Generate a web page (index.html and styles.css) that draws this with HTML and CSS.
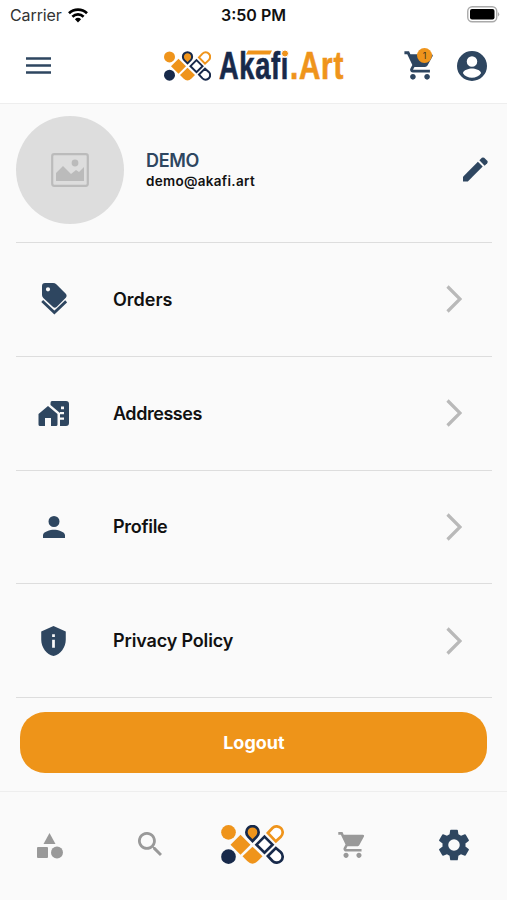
FILE: index.html
```html
<!DOCTYPE html>
<html lang="en">
<head>
<meta charset="utf-8">
<title>Akafi.Art</title>
<link rel="stylesheet" href="styles.css">
</head>
<body>
<svg class="defs" width="0" height="0">
  <symbol id="mark" viewBox="33 29 188 117">
    <circle cx="55" cy="51" r="22" fill="#ef941b"/>
    <circle cx="55" cy="124" r="22" fill="#17294a"/>
    <path d="M91 58l30 30-30 30-30-30z" fill="#ef941b"/>
    <path d="M127 94l30 29-14 14q-16 16-32 0l-14-14z" fill="#ef941b"/>
    <path d="M127 77l-13-13a18.500 18.500 0 1 1 26 0z" fill="#ef941b" stroke="#17294a" stroke-width="8"/>
    <path d="M163 64l24 24-24 24-24-24z" fill="#fff" stroke="#17294a" stroke-width="8"/>
    <path d="M173 53l14-15a18 18 0 1 1 25 26l-15 14z" fill="#fff" stroke="#ef941b" stroke-width="8"/>
    <path d="M173 122l14 15a18 18 0 1 0 25-26l-15-13z" fill="#fff" stroke="#17294a" stroke-width="8"/>
  </symbol>
  <symbol id="cart" viewBox="0 0 24 24"><path d="M7 18c-1.100 0-1.990.9-1.990 2S5.900 22 7 22s2-.9 2-2-.9-2-2-2zM1 2v2h2l3.600 7.590-1.350 2.450c-.16.280-.25.610-.25.960 0 1.100.9 2 2 2h12v-2H7.420c-.14 0-.25-.11-.25-.25l.03-.12.900-1.630h7.450c.75 0 1.410-.41 1.750-1.030l3.580-6.490A1 1 0 0 0 20 4H5.210l-.94-2H1zm16 16c-1.100 0-1.990.9-1.990 2s.89 2 1.990 2 2-.9 2-2-.9-2-2-2z"/></symbol>
</svg>
<div class="status">
  <span class="carrier">Carrier</span>
  <svg class="wifi" viewBox="0 0 20 15" fill="none" stroke="#000"><path class="arc" d="M1 5.200a13 13 0 0 1 18 0" stroke-width="2.700"/><path class="arc" d="M4.400 8.700a8 8 0 0 1 11.200 0" stroke-width="2.600"/><path d="M10 14.500L6.900 11.300a4.500 4.500 0 0 1 6.200 0z" fill="#000" stroke="none"/></svg>
  <span class="time">3:50 PM</span>
  <svg class="battery" viewBox="0 0 33 17"><rect x=".75" y=".75" width="29" height="15" rx="4.500" fill="#fff" stroke="#aaa" stroke-width="1.400"/><rect x="3" y="3" width="24.500" height="10.500" rx="2"/><path d="M31.200 6q2 2.300 0 4.600z" fill="#999"/></svg>
</div>
<header class="header">
  <svg class="menu" viewBox="0 0 25 17"><path d="M0 1.500h25M0 8.500h25M0 15.500h25" stroke="#2e4660" stroke-width="2.600"/></svg>
  <div class="brand">
    <svg class="brand-mark"><use href="#mark"/></svg>
    <svg class="wordmark" viewBox="0 0 126 36"><text class="word navy" x="0" y="31" textLength="70" lengthAdjust="spacingAndGlyphs">Akafi</text><text class="word orange" x="71" y="31" textLength="54" lengthAdjust="spacingAndGlyphs">.Art</text><path d="M29 2.500h24l-2 4H27z" fill="#ef941b"/><circle cx="66" cy="5.500" r="3.500" fill="#ef941b" stroke="#fff"/></svg>
  </div>
  <div class="header-cart"><svg viewBox="0 0 24 24"><use href="#cart"/></svg><span class="badge">1</span></div>
  <svg class="account" viewBox="2 2 20 20"><path d="M12 2a10 10 0 1 0 0 20 10 10 0 0 0 0-20zm0 3.500a3.500 3.500 0 1 1 0 7 3.500 3.500 0 0 1 0-7zm0 14.300c-2.500 0-4.900-1.100-6-3 .03-2 4-3.100 6-3.100s5.970 1.100 6 3.100c-1.300 1.900-3.500 3-6 3z"/></svg>
</header>
<main class="main">
  <section class="user">
    <div class="avatar"><svg viewBox="0 0 38 34"><rect x="1.200" y="1.200" width="35.600" height="31.600" rx="2" fill="none" stroke="#bbb" stroke-width="2.200"/><path d="M5 28V20l7-7 8 8 5-4 3 2 5-5v14z" fill="#bbb"/><circle cx="24" cy="10" r="3.400" fill="#bbb"/></svg></div>
    <div class="identity"><div class="name">DEMO</div><div class="email">demo@akafi.art</div></div>
    <svg class="edit" viewBox="0 0 26 26"><path d="M0 20.500L15.500 5l5 5L5 25.500H0z"/><path d="M17 3.500l2.600-2.600q1.200-1 2.400 0L25.200 4q1 1.200 0 2.400L22.500 9z"/></svg>
  </section>
  <nav class="list">
    <a class="row"><span class="icon"><svg class="tags" viewBox="0 0 26 32"><path fill-rule="evenodd" d="M1 3Q1 0 4 0h8q2 0 3.300 1.300l9.500 9.500q1.600 2 0 4l-9 9q-2 2-4 0L2.300 15Q1 13.700 1 12zm6 1.200a2.100 2.100 0 1 0 0 4.200 2.100 2.100 0 0 0 0-4.200z"/><path d="M1.200 18L13.400 29.600 25.200 18.300" fill="none" stroke="#2e4660" stroke-width="2.800"/></svg></span><span class="label">Orders</span><svg class="chevron" viewBox="0 0 16 28"><path d="M1.500 1.500L14 14 1.500 26.500"/></svg></a>
    <a class="row"><span class="icon"><svg class="home" viewBox="0 0 31 25"><path d="M.5 13L10 5l9.500 8v10.500q0 1.500-1.500 1.500h-5v-8H7v8H2Q.5 25 .5 23.500z"/><path fill-rule="evenodd" d="M14 0h14q3 0 3 3v19q0 3-3 3h-6V12L12.500 4V2q0-2 1.500-2zm9 5.500v2.700h3V5.500zm-1 5.500v2.200h4V11zm0 5.500v2.200h4v-2.200z"/></svg></span><span class="label addresses">Addresses</span><svg class="chevron" viewBox="0 0 16 28"><path d="M1.500 1.500L14 14 1.500 26.500"/></svg></a>
    <a class="row"><span class="icon"><svg class="person" viewBox="4 4 16 16"><path d="M12 12a4 4 0 1 0 0-8 4 4 0 0 0 0 8zm0 2c-2.670 0-8 1.340-8 4v2h16v-2c0-2.660-5.330-4-8-4z"/></svg></span><span class="label profile">Profile</span><svg class="chevron" viewBox="0 0 16 28"><path d="M1.500 1.500L14 14 1.500 26.500"/></svg></a>
    <a class="row"><span class="icon"><svg class="shield" viewBox="3 1 18 22"><path fill-rule="evenodd" d="M12 1L3 5v6c0 5.550 3.840 10.740 9 12 5.160-1.260 9-6.450 9-12V5zm-1 6h2v2h-2zm0 4h2v6h-2z"/></svg></span><span class="label privacy">Privacy Policy</span><svg class="chevron" viewBox="0 0 16 28"><path d="M1.500 1.500L14 14 1.500 26.500"/></svg></a>
  </nav>
  <button class="logout">Logout</button>
</main>
<footer class="tabs">
  <svg class="shapes" viewBox="0 0 26 26"><path d="M12.500 0l6 11h-12z"/><rect y="14" width="11" height="11" rx="1"/><circle cx="20" cy="19.500" r="6"/></svg>
  <svg class="search" viewBox="3 3 17.500 17.500"><path d="M15.500 14h-.79l-.28-.27A6.500 6.500 0 1 0 13.730 14.430l.27.280v.79l5 4.990L20.490 19zm-6 0a4.500 4.500 0 1 1 0-9 4.500 4.500 0 0 1 0 9z"/></svg>
  <svg class="tab-mark"><use href="#mark"/></svg>
  <svg class="tab-cart" viewBox="0 0 24 24"><use href="#cart"/></svg>
  <svg class="gear" viewBox="2 2 20 20"><path d="M19.140 12.940c.04-.3.060-.61.060-.94 0-.32-.02-.64-.07-.94l2.030-1.580a.49.490 0 0 0 .12-.61l-1.920-3.320a.49.490 0 0 0-.59-.22l-2.390.96a7 7 0 0 0-1.620-.94l-.36-2.540A.48.480 0 0 0 13.920 2.400h-3.840a.48.480 0 0 0-.48.410l-.36 2.540a7.300 7.300 0 0 0-1.620.94l-2.390-.96a.48.480 0 0 0-.59.220L2.720 8.870a.48.480 0 0 0 .12.610l2.030 1.580a6 6 0 0 0 0 1.880l-2.030 1.580a.49.490 0 0 0-.12.610l1.920 3.320c.12.220.37.290.59.220l2.390-.96c.5.380 1.030.7 1.620.94l.36 2.540c.05.240.24.410.48.410h3.840c.24 0 .44-.17.470-.41l.36-2.540a7 7 0 0 0 1.620-.94l2.390.96c.22.080.47 0 .59-.22l1.920-3.320a.48.480 0 0 0-.12-.61zM12 15.600a3.600 3.600 0 1 1 0-7.200 3.600 3.600 0 0 1 0 7.200z"/></svg>
</footer>
</body>
</html>
```
FILE: styles.css
```css
* { box-sizing: border-box; }
body { margin: 0; width: 507px; height: 900px; display: flex; flex-direction: column; background: #fafafa; font-family: Inter, "Liberation Sans", sans-serif; color: #111; overflow: hidden; }
svg { display: block; flex: none; fill: #2e4660; }
.defs { position: absolute; }
.status { height: 30px; flex: none; display: flex; padding: 0 7px 0 10px; align-items: center; background: #fff; font-size: 16px; line-height: 30px; }
.carrier { width: 58px; color: #333; letter-spacing: -.1px; white-space: nowrap; }
.wifi { width: 20px; height: 15px; }
.arc { fill: none; }
.time { width: 70px; margin-left: 133px; font-weight: 600; white-space: nowrap; }
.battery { width: 33px; height: 17px; margin-left: auto; margin-top: -2px; fill: #000; }
.header { height: 74px; flex: none; background: #fff; border-bottom: 1px solid #eee; display: flex; align-items: center; padding: 0 19px 2px 26px; }
.menu { width: 25px; height: 17px; }
.brand { display: flex; align-items: center; margin-left: 113px; gap: 8px; }
.brand-mark { width: 47px; height: 30px; }
.wordmark { width: 126px; height: 36px; overflow: visible; }
.word { font: 700 39px "Liberation Sans", sans-serif; letter-spacing: 1px; stroke-width: .7px; }
.navy { fill: #17294a; stroke: #17294a; }
.orange { fill: #ef941b; stroke: #ef941b; }
.header-cart { position: relative; margin-left: 58px; margin-right: 20px; }
.header-cart svg { width: 34px; height: 35px; }
.badge { position: absolute; left: 14px; top: 0; width: 15px; height: 15px; border-radius: 50%; background: #ef941b; color: #3b3420; font-size: 9px; line-height: 15px; text-align: center; }
.account { width: 30px; height: 30px; }
.main { flex: 1; padding: 0 15px 0 16px; }
.user { height: 139px; display: flex; align-items: center; padding: 0 4px 7px 0; border-bottom: 1px solid #ddd; }
.avatar { width: 108px; height: 108px; border-radius: 50%; background: #ddd; display: flex; align-items: center; justify-content: center; }
.avatar svg { width: 38px; height: 34px; }
.identity { margin-left: 22px; flex: 1; }
.name { color: #2e4660; font-size: 18px; font-weight: 600; line-height: 22px; letter-spacing: -.3px; padding-top: 1px; }
.email { font-size: 13.500px; font-weight: 600; line-height: 18px; color: #111; letter-spacing: .3px; }
.edit { width: 25px; height: 25px; }
.row { height: 113.800px; display: flex; align-items: center; border-bottom: 1px solid #ddd; }
.icon { width: 75px; display: flex; justify-content: center; }
.label { flex: 1; margin-left: 22px; font-size: 18px; font-weight: 600; color: #111; }
.addresses { letter-spacing: -.45px; }
.profile { letter-spacing: -.3px; }
.privacy { letter-spacing: -.15px; }
.chevron { width: 16px; height: 28px; margin-right: 30px; fill: none; stroke: #b9b9b9; stroke-width: 3.200; }
.tags { width: 26px; height: 32px; }
.home { width: 31px; height: 25px; }
.person { width: 22px; height: 22px; }
.shield { width: 25px; height: 30px; }
.logout { display: block; width: 467px; height: 61px; margin: 14px 0 0 4.400px; border: 0; border-radius: 25px; background: #ee9419; color: #fff; font: 700 18px Inter, sans-serif; }
.tabs { height: 109px; flex: none; border-top: 1px solid #eee; display: flex; align-items: flex-start; padding-left: 37px; }
.tabs svg { fill: #999; }
.tabs .shapes { width: 26px; height: 26px; margin-top: 41px; }
.tabs .search { width: 24px; height: 24px; margin: 40px 0 0 75px; }
.tabs .tab-mark { width: 63px; height: 39px; margin: 33px 0 0 59px; }
.tabs .tab-cart { width: 31px; height: 32px; margin: 37px 0 0 53px; }
.tabs .gear { width: 32px; height: 32px; margin: 37px 0 0 70px; fill: #2e4660; }
```
